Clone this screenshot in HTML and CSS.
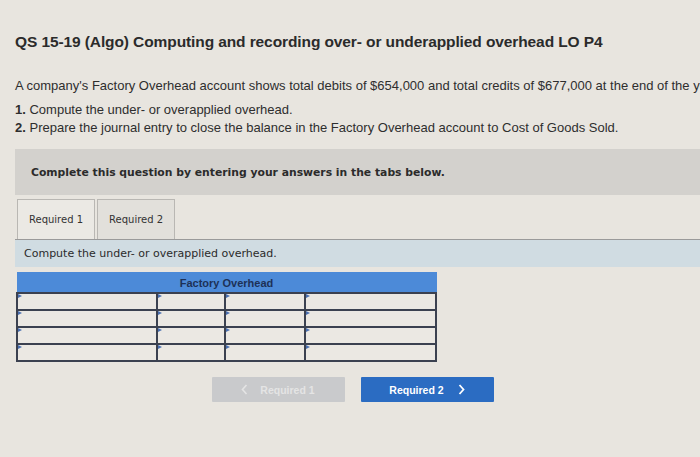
FILE: index.html
```html
<!DOCTYPE html>
<html>
<head>
<meta charset="utf-8">
<link rel="stylesheet" href="styles.css">
</head>
<body>
<div class="page">
  <h1 class="title">QS 15-19 (Algo) Computing and recording over- or underapplied overhead LO P4</h1>
  <p class="intro">A company's Factory Overhead account shows total debits of $654,000 and total credits of $677,000 at the end of the year.</p>
  <ol class="tasks">
    <li><b>1.</b> Compute the under- or overapplied overhead.</li>
    <li><b>2.</b> Prepare the journal entry to close the balance in the Factory Overhead account to Cost of Goods Sold.</li>
  </ol>
  <div class="panel">Complete this question by entering your answers in the tabs below.</div>
  <div class="tabs">
    <div class="tab active">Required 1</div>
    <div class="tab">Required 2</div>
  </div>
  <div class="band">Compute the under- or overapplied overhead.</div>
  <table class="ledger">
    <tr><th colspan="4">Factory Overhead</th></tr>
    <tr><td class="c1"></td><td class="c2"></td><td class="c3"></td><td class="c4"></td></tr>
    <tr><td class="c1"></td><td class="c2"></td><td class="c3"></td><td class="c4"></td></tr>
    <tr><td class="c1"></td><td class="c2"></td><td class="c3"></td><td class="c4"></td></tr>
    <tr><td class="c1"></td><td class="c2"></td><td class="c3"></td><td class="c4"></td></tr>
  </table>
  <div class="nav">
    <button class="btn prev"><svg class="chev" width="7" height="11" viewBox="0 0 7 11"><polyline points="5.5,1 1.5,5.5 5.5,10" fill="none" stroke="currentColor" stroke-width="1.6"/></svg>Required 1</button>
    <button class="btn next">Required 2<svg class="chev" width="7" height="11" viewBox="0 0 7 11"><polyline points="1.5,1 5.5,5.5 1.5,10" fill="none" stroke="currentColor" stroke-width="1.8"/></svg></button>
  </div>
</div>
</body>
</html>
```
FILE: styles.css
```css
html, body {
  margin: 0;
  padding: 0;
  background: #e8e5df;
  overflow: hidden;
  width: 700px;
  height: 457px;
}
.page {
  padding: 33px 0 0 15px;
  width: 720px;
  font-family: "Liberation Sans", Arial, sans-serif;
  color: #262626;
}
.title {
  margin: 0;
  font-size: 15.5px;
  font-weight: bold;
  color: #2b2b2b;
  letter-spacing: -0.1px;
}
.intro {
  margin: 27px 0 0 0;
  font-size: 13px;
  white-space: nowrap;
  color: #2e2e2e;
}
.tasks {
  list-style: none;
  margin: 8px 0 0 0;
  padding: 0;
  font-size: 13px;
  line-height: 18px;
  color: #2e2e2e;
}
.panel {
  margin-top: 12px;
  background: #d3d1cd;
  height: 46px;
  padding-left: 16px;
  display: flex;
  align-items: center;
  font-family: "DejaVu Sans", Verdana, sans-serif;
  font-weight: bold;
  font-size: 10.8px;
  color: #2b2b2b;
}
.tabs {
  display: flex;
  gap: 2px;
  margin-top: 4px;
  padding-left: 2px;
  border-bottom: 1px solid #9a9a9a;
}
.tab {
  height: 39px;
  padding: 0 11px;
  display: flex;
  align-items: center;
  border: 1px solid #b9b7b3;
  border-bottom: none;
  background: #e2e0db;
  font-family: "DejaVu Sans", Verdana, sans-serif;
  font-size: 10px;
  color: #333;
}
.tab.active {
  background: #ebe9e4;
}
.band {
  background: #d0dce2;
  height: 27px;
  display: flex;
  align-items: center;
  padding-left: 9px;
  font-family: "DejaVu Sans", Verdana, sans-serif;
  font-size: 11px;
  color: #2b2b2b;
}
.ledger {
  margin: 5px 0 0 1px;
  border-collapse: collapse;
}
.ledger th {
  background: #4c8ad8;
  height: 19px;
  padding: 0;
  font-size: 11px;
  font-weight: bold;
  color: #1d3157;
  border: 1px solid #4c8ad8;
  border-bottom: 2px solid #3b4150;
}
.ledger td {
  position: relative;
  height: 15px;
  padding: 0;
  background: #ebe8e3;
  border: 2px solid #3b4150;
}
.ledger td::before {
  content: "";
  position: absolute;
  left: 0;
  top: 0;
  border-left: 4px solid #4a6fb0;
  border-top: 2px solid transparent;
  border-bottom: 2px solid transparent;
}
.c1 { width: 138px; }
.c2 { width: 66px; }
.c3 { width: 78px; }
.c4 { width: 129px; }
.nav {
  width: 675px;
  display: flex;
  justify-content: center;
  gap: 16px;
  margin-top: 15px;
}
.btn {
  width: 133px;
  height: 25px;
  border: none;
  border-radius: 1px;
  font-family: "Liberation Sans", Arial, sans-serif;
  font-weight: bold;
  font-size: 10.5px;
  padding: 0;
  display: flex;
  align-items: center;
  justify-content: center;
  gap: 12px;
}
.btn.prev {
  background: #c9cacc;
  color: #e4e4e4;
}
.btn.next {
  background: #2b6cc2;
  color: #ffffff;
  gap: 14px;
}
```
